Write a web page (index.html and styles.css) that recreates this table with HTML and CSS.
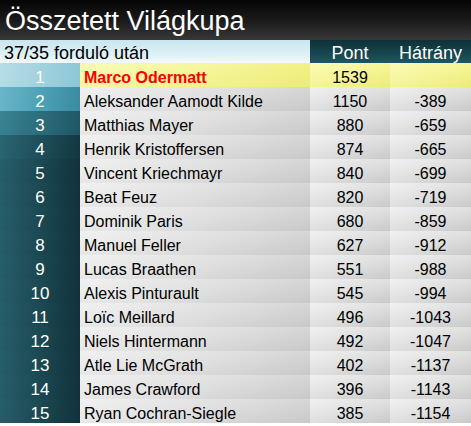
FILE: index.html
```html
<!DOCTYPE html>
<html>
<head>
<meta charset="utf-8">
<link rel="stylesheet" href="styles.css">
</head>
<body>
<div class="board">
  <div class="title">Összetett Világkupa</div>
  <div class="grid">
    <div class="sub">37/35 forduló után</div>
    <div class="hd">Pont</div>
    <div class="hd">Hátrány</div>

    <div class="rk r1">1</div><div class="nm lead red">Marco Odermatt</div><div class="num lead">1539</div><div class="num lead"></div>
    <div class="rk r2">2</div><div class="nm">Aleksander Aamodt Kilde</div><div class="num">1150</div><div class="num">-389</div>
    <div class="rk r3">3</div><div class="nm">Matthias Mayer</div><div class="num">880</div><div class="num">-659</div>
    <div class="rk r4">4</div><div class="nm">Henrik Kristoffersen</div><div class="num">874</div><div class="num">-665</div>
    <div class="rk">5</div><div class="nm">Vincent Kriechmayr</div><div class="num">840</div><div class="num">-699</div>
    <div class="rk">6</div><div class="nm">Beat Feuz</div><div class="num">820</div><div class="num">-719</div>
    <div class="rk">7</div><div class="nm">Dominik Paris</div><div class="num">680</div><div class="num">-859</div>
    <div class="rk">8</div><div class="nm">Manuel Feller</div><div class="num">627</div><div class="num">-912</div>
    <div class="rk">9</div><div class="nm">Lucas Braathen</div><div class="num">551</div><div class="num">-988</div>
    <div class="rk">10</div><div class="nm">Alexis Pinturault</div><div class="num">545</div><div class="num">-994</div>
    <div class="rk">11</div><div class="nm">Loïc Meillard</div><div class="num">496</div><div class="num">-1043</div>
    <div class="rk">12</div><div class="nm">Niels Hintermann</div><div class="num">492</div><div class="num">-1047</div>
    <div class="rk">13</div><div class="nm">Atle Lie McGrath</div><div class="num">402</div><div class="num">-1137</div>
    <div class="rk">14</div><div class="nm">James Crawford</div><div class="num">396</div><div class="num">-1143</div>
    <div class="rk">15</div><div class="nm">Ryan Cochran-Siegle</div><div class="num">385</div><div class="num">-1154</div>
  </div>
</div>
</body>
</html>
```

FILE: styles.css
```css
html, body {
  margin: 0;
  padding: 0;
  background: #ffffff;
}
body {
  font-family: "Liberation Sans", Arial, sans-serif;
  width: 471px;
  height: 426px;
  overflow: hidden;
}
.board {
  width: 471px;
}
.title {
  height: 40px;
  box-sizing: border-box;
  padding-left: 5px;
  padding-top: 1px;
  background: linear-gradient(#050505, #1a1a1a 50%, #383838);
  color: #ffffff;
  font-size: 27px;
  line-height: 40px;
  white-space: nowrap;
  overflow: hidden;
}
.grid {
  display: grid;
  grid-template-columns: 80px 230px 80px 81px;
  grid-auto-rows: 24px;
  grid-template-rows: 23px;
}
.sub {
  grid-column: 1 / 3;
  padding-left: 4px;
  padding-top: 2px;
  font-size: 18px;
  line-height: 23px;
  color: #000;
  background: linear-gradient(#c9e6ef, #ddf0f5 60%, #f4fafc);
}
.hd {
  font-size: 18px;
  line-height: 23px;
  padding-top: 2px;
  color: #fff;
  text-align: center;
  background: linear-gradient(#0e3139, #174650 60%, #1f5764);
}
.rk {
  color: #fff;
  font-size: 17px;
  line-height: 24px;
  padding-top: 3px;
  text-align: center;
  background: linear-gradient(100deg, #275f6c, #1a4650 55%, #11313a);
}
.rk.r1 { background: linear-gradient(100deg, #b6dde7, #9fd1de 55%, #8cc6d5); }
.rk.r2 { background: linear-gradient(100deg, #6ab6c9, #4c9fb4 55%, #3a8aa0); }
.rk.r3 { background: linear-gradient(100deg, #3a8393, #2a6b7a 55%, #1e5663); }
.rk.r4 { background: linear-gradient(100deg, #2a6673, #1d4c57 55%, #133640); }
.nm, .num {
  font-size: 16px;
  line-height: 24px;
  padding-top: 3px;
  color: #000;
  white-space: nowrap;
  background: linear-gradient(165deg, #f1f1f1, #dedede 55%, #c9c9c9);
}
.nm {
  padding-left: 4px;
}
.num {
  text-align: center;
}
.lead {
  background: linear-gradient(165deg, #fbfbb8, #f4f494 55%, #ecec76);
}
.red {
  color: #ff0000;
  font-weight: bold;
}
```
